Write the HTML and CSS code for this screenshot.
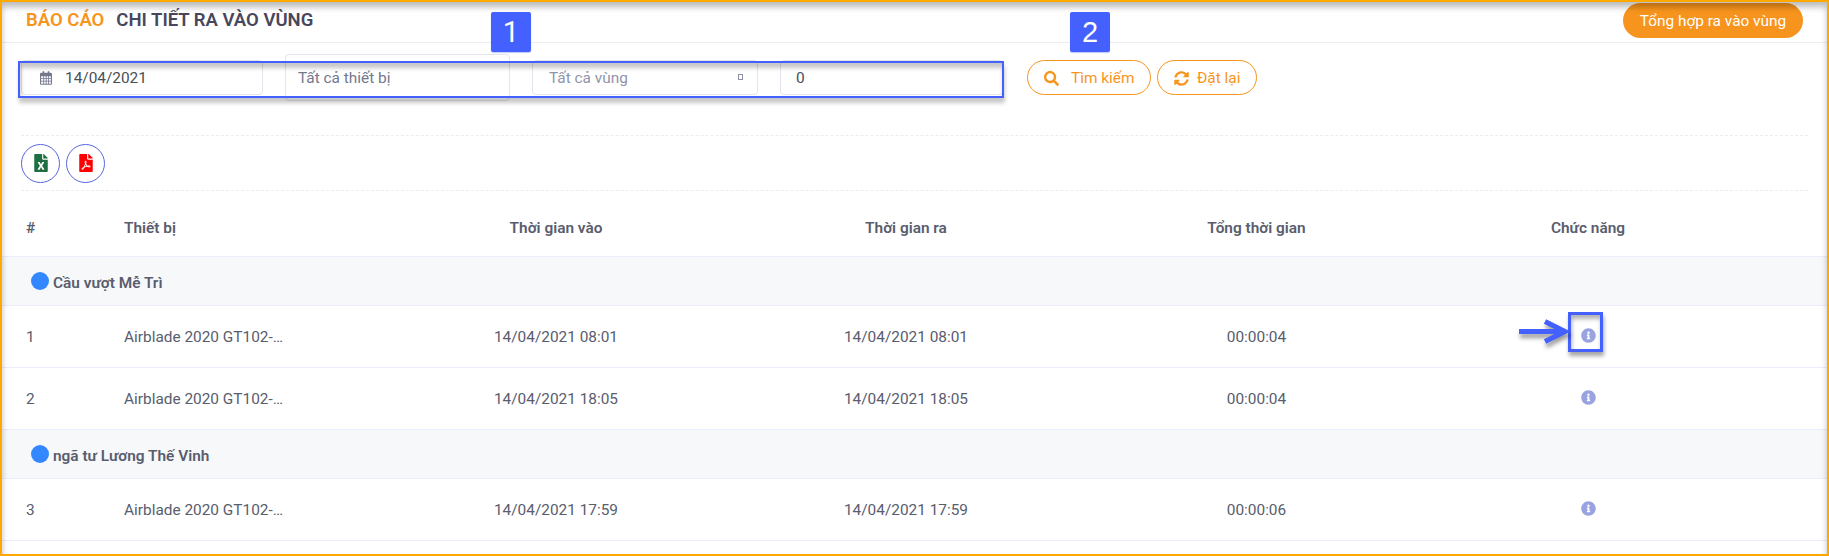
FILE: index.html
```html
<!DOCTYPE html>
<html lang="vi">
<head>
<meta charset="utf-8">
<title>Chi tiết ra vào vùng</title>
<link rel="stylesheet" href="styles.css">
</head>
<body>
<svg class="defs" aria-hidden="true">
  <symbol id="info" viewBox="0 0 512 512"><path fill="currentColor" d="M256 8C119 8 8 119 8 256s111 248 248 248 248-111 248-248S393 8 256 8zm0 110a42 42 0 1 1 0 84 42 42 0 0 1 0-84zm56 254c0 7-5 12-12 12h-88c-7 0-12-5-12-12v-24c0-7 5-12 12-12h12v-64h-12c-7 0-12-5-12-12v-24c0-7 5-12 12-12h64c7 0 12 5 12 12v100h12c7 0 12 5 12 12z"/></symbol>
</svg>
<div class="page">
  <header class="head">
    <h1 class="title"><span class="title-main">BÁO CÁO</span><span class="title-sub">CHI TIẾT RA VÀO VÙNG</span></h1>
    <a class="summary">Tổng hợp ra vào vùng</a>
  </header>
  <section class="filters">
    <div class="field date">
      <svg class="cal" viewBox="0 0 448 512"><path fill="currentColor" fill-rule="evenodd" d="M48 64h48V12q0-12 12-12h40q12 0 12 12v52h128V12q0-12 12-12h40q12 0 12 12v52h48q48 0 48 48v352q0 48-48 48H48q-48 0-48-48V112q0-48 48-48zM42 192v72h80v-72zm112 0v72h60v-72zm92 0v72h60v-72zm92 0v72h68v-72zM42 294v66h80v-66zm112 0v66h60v-66zm92 0v66h60v-66zm92 0v66h68v-66zM42 390v76h80v-76zm112 0v76h60v-76zm92 0v76h60v-76zm92 0v76h68v-76z"/></svg>
      <span>14/04/2021</span>
    </div>
    <div class="field device">Tất cả thiết bị</div>
    <div class="field zone"><span>Tất cả vùng</span><i class="caret"></i></div>
    <div class="field count">0</div>
    <div class="buttons">
      <a class="btn search"><svg class="ico" viewBox="0 0 512 512"><path fill="currentColor" d="M505 442.700L405.300 343c-4.500-4.500-10.600-7-17-7H372c27.600-35.300 44-79.700 44-128C416 93.100 322.900 0 208 0S0 93.100 0 208s93.100 208 208 208c48.300 0 92.700-16.400 128-44v16.300c0 6.400 2.500 12.500 7 17l99.700 99.700c9.400 9.400 24.600 9.400 33.900 0l28.300-28.300c9.400-9.400 9.400-24.600.1-34zM208 336c-70.700 0-128-57.200-128-128 0-70.700 57.200-128 128-128 70.700 0 128 57.200 128 128 0 70.700-57.200 128-128 128z"/></svg>Tìm kiếm</a>
      <a class="btn reset"><svg class="ico" viewBox="0 0 512 512"><path fill="currentColor" d="M370.720 133.280C339.458 104.008 298.888 87.962 255.848 88c-77.458.068-144.328 53.178-162.791 126.850-1.344 5.363-6.122 9.150-11.651 9.150H24.103c-7.498 0-13.194-6.807-11.807-14.176C33.933 94.924 134.813 8 256 8c66.448 0 126.791 26.136 171.315 68.685L463.030 40.970C478.149 25.851 504 36.559 504 57.941V192c0 13.255-10.745 24-24 24H345.941c-21.382 0-32.090-25.851-16.971-40.971l41.750-41.749zM32 296h134.059c21.382 0 32.090 25.851 16.971 40.971l-41.750 41.750c31.262 29.273 71.835 45.319 114.876 45.280 77.418-.070 144.315-53.144 162.787-126.849 1.344-5.363 6.122-9.150 11.651-9.150h57.304c7.498 0 13.194 6.807 11.807 14.176C478.067 417.076 377.187 504 256 504c-66.448 0-126.791-26.136-171.315-68.685L48.970 471.030C33.851 486.149 8 475.441 8 454.059V320c0-13.255 10.745-24 24-24z"/></svg>Đặt lại</a>
    </div>
  </section>
  <section class="exports">
    <a class="round excel"><svg viewBox="0 0 384 512"><path fill="currentColor" d="M224 136V0H24C10.700 0 0 10.700 0 24v464c0 13.300 10.700 24 24 24h336c13.300 0 24-10.700 24-24V160H248c-13.200 0-24-10.800-24-24zm60.100 106.500L224 336l60.100 93.500c5.100 8-.6 18.500-10.100 18.500h-34.900c-4.400 0-8.500-2.400-10.600-6.300C208.900 405.500 192 373 192 373c-6.400 14.800-10 20-36.600 68.800-2.100 3.900-6.100 6.300-10.500 6.300H110c-9.500 0-15.200-10.500-10.100-18.500l60.300-93.500-60.300-93.500c-5.200-8 .6-18.500 10.100-18.500h34.800c4.400 0 8.500 2.400 10.600 6.300 26.100 48.800 20 33.600 36.600 68.500 0 0 6.100-11.700 36.600-68.500 2.100-3.900 6.200-6.300 10.600-6.300H274c9.500-.1 15.200 10.400 10.100 18.400zM384 121.900v6.100H256V0h6.100c6.400 0 12.500 2.500 17 7l97.900 98c4.500 4.500 7 10.600 7 16.900z"/></svg></a>
    <a class="round pdf"><svg viewBox="0 0 384 512"><path fill="currentColor" d="M181.900 256.100c-5-16-4.900-46.900-2-46.900 8.400 0 7.600 36.900 2 46.900zm-1.700 47.200c-7.700 20.200-17.300 43.300-28.400 62.700 18.300-7 39-17.200 62.900-21.900-12.700-9.600-24.900-23.400-34.500-40.800zM86.100 428.100c0 .8 13.200-5.400 34.900-40.200-6.700 6.300-29.100 24.500-34.900 40.200zM248 160h136v328c0 13.300-10.700 24-24 24H24c-13.300 0-24-10.700-24-24V24C0 10.700 10.700 0 24 0h200v136c0 13.200 10.800 24 24 24zm-8 171.800c-20-12.200-33.300-29-42.700-53.800 4.500-18.500 11.600-46.600 6.200-64.200-4.700-29.400-42.400-26.500-47.800-6.800-5 18.300-.4 44.100 8.100 77-11.600 27.600-28.700 64.600-40.800 85.800-.1 0-.1.100-.2.100-27.100 13.900-73.600 44.500-54.500 68 5.600 6.900 16 10 21.500 10 17.900 0 35.700-18 61.100-61.800 25.800-8.500 54.100-19.100 79-23.200 21.700 11.800 47.100 19.500 64 19.500 29.200 0 31.200-32 19.700-43.400-13.900-13.600-54.300-9.700-73.600-7.200zM377 105L279 7c-4.500-4.500-10.600-7-17-7h-6v128h128v-6.100c0-6.300-2.500-12.400-7-16.900zm-74.100 255.300c4.100-2.700-2.500-11.900-42.800-9 37.100 15.800 42.800 9 42.800 9z"/></svg></a>
  </section>
  <section class="table">
    <div class="row thead"><span>#</span><span>Thiết bị</span><span class="c">Thời gian vào</span><span class="c">Thời gian ra</span><span class="c">Tổng thời gian</span><span class="c">Chức năng</span></div>
    <div class="group"><i class="dot"></i>Cầu vượt Mễ Trì</div>
    <div class="row"><span>1</span><span>Airblade 2020 GT102-…</span><span class="c">14/04/2021 08:01</span><span class="c">14/04/2021 08:01</span><span class="c">00:00:04</span><span class="c"><svg class="info"><use href="#info"/></svg></span></div>
    <div class="row"><span>2</span><span>Airblade 2020 GT102-…</span><span class="c">14/04/2021 18:05</span><span class="c">14/04/2021 18:05</span><span class="c">00:00:04</span><span class="c"><svg class="info"><use href="#info"/></svg></span></div>
    <div class="group"><i class="dot"></i>ngã tư Lương Thế Vinh</div>
    <div class="row"><span>3</span><span>Airblade 2020 GT102-…</span><span class="c">14/04/2021 17:59</span><span class="c">14/04/2021 17:59</span><span class="c">00:00:06</span><span class="c"><svg class="info"><use href="#info"/></svg></span></div>
  </section>
  <div class="frame"></div>
  <div class="mark mark-filters"></div>
  <div class="mark mark-info"></div>
  <svg class="arrow" viewBox="0 0 56 30"><path d="M1 15.500H46M27 5.500L47 15.500L27 25.500" fill="none" stroke="#4460ff" stroke-width="5"/><path d="M37 10L51 15.500L37 21z" fill="#4460ff"/></svg>
  <b class="step step-1">1</b>
  <b class="step step-2">2</b>
</div>
</body>
</html>
```
FILE: styles.css
```css
* { box-sizing: border-box; }
body {
  margin: 0;
  background: #fff;
  color: #595d6e;
  font: 400 15.4px/20px Roboto, sans-serif;
}
.defs { position: absolute; width: 0; height: 0; }
.page {
  position: relative;
  width: 1829px;
  height: 556px;
  overflow: hidden;
}

.head {
  display: flex;
  justify-content: space-between;
  align-items: flex-start;
  height: 43px;
  padding: 3px 26px 0 26px;
  border-bottom: 1px solid #ebedf0;
}
.title {
  display: flex;
  gap: 12px;
  margin: 6px 0 0;
  font-size: 18.5px;
  line-height: 22px;
  font-weight: 600;
  color: #48465b;
}
.title-main { color: #f7941d; }
.summary {
  width: 180px;
  height: 35px;
  border-radius: 18px;
  background: #f7941d;
  color: #fff;
  line-height: 36px;
  text-align: center;
}

.filters {
  display: flex;
  align-items: center;
  height: 92px;
  padding: 0 20px 23px 21px;
}
.field {
  display: flex;
  align-items: center;
  height: 35px;
  padding: 1px 15px 0;
  border: 1px solid #e2e5ec;
  border-radius: 4px;
  color: #495057;
}
.date { width: 242px; margin-right: 22px; padding-left: 18px; gap: 13px; }
.cal { width: 12px; height: 14px; color: #74788d; }
.device { width: 225px; height: 47px; margin-right: 22px; padding-left: 12px; color: #74788d; }
.zone { width: 226px; margin-right: 22px; justify-content: space-between; color: #9194a9; padding-left: 16px; padding-right: 14px; }
.caret { width: 5px; height: 6px; margin-top: -2px; border: 1px solid #8d90a5; }
.count { width: 224px; }
.buttons { display: flex; gap: 6px; margin-left: 23px; }
.btn {
  display: flex;
  align-items: center;
  height: 35px;
  padding-top: 1px;
  border: 1px solid #f7941d;
  border-radius: 18px;
  color: #f7941d;
}
.ico { width: 15px; height: 15px; }
.search { width: 124px; padding-left: 16px; gap: 12px; }
.reset { width: 100px; padding-left: 16px; gap: 8px; }

.exports {
  display: flex;
  align-items: center;
  gap: 6px;
  height: 56px;
  margin: 0 21px;
  border: dashed #ebedf2;
  border-width: 1px 0;
}
.round {
  display: flex;
  align-items: center;
  justify-content: center;
  width: 39px;
  height: 39px;
  border: 1px solid #5867dd;
  border-radius: 50%;
}
.round svg { width: 14px; height: 18px; }
.excel { color: #1d6f42; }
.pdf { color: #f00; }

.row {
  display: grid;
  grid-template-columns: 98px 257px 350px 350px 351px 312px;
  align-items: center;
  height: 62px;
  padding-left: 26px;
  border-bottom: 1px solid #ebedff;
}
.thead { height: 66px; font-weight: 600; padding-top: 9px; }
.c { text-align: center; }
.group {
  display: flex;
  align-items: center;
  gap: 4px;
  height: 49px;
  padding: 4px 0 0 31px;
  border-bottom: 1px solid #ebedff;
  background: #f7f8fa;
  font-weight: 600;
}
.dot { width: 18px; height: 18px; margin-top: -4px; border-radius: 50%; background: #3388ff; }
.info { display: inline-block; width: 15px; height: 15px; color: #99a3e0; vertical-align: middle; margin-top: -3px; }

.frame {
  position: absolute;
  inset: 0;
  border: 2px solid #ffa800;
  box-shadow: inset 0 5px 6px rgba(0, 0, 0, .27);
}
.mark { position: absolute; border: 2px solid #4460ff; }
.mark-filters {
  left: 18px;
  top: 61px;
  width: 986px;
  height: 37px;
  box-shadow: 1px 5px 4px rgba(0, 0, 0, .22), inset 1px 5px 4px rgba(0, 0, 0, .22);
}
.mark-info {
  left: 1568px;
  top: 312px;
  width: 35px;
  height: 40px;
  border-width: 3px;
  box-shadow: 1px 4px 4px rgba(0, 0, 0, .35), inset 1px 4px 4px rgba(0, 0, 0, .3);
}
.arrow {
  position: absolute;
  left: 1518px;
  top: 316px;
  width: 56px;
  height: 30px;
  overflow: visible;
  filter: drop-shadow(1px 4px 2px rgba(0, 0, 0, .4));
}
.step {
  position: absolute;
  top: 12px;
  width: 40px;
  height: 40px;
  border-radius: 2px;
  background: #4460ff;
  box-shadow: 0 1px 1px rgba(68, 96, 255, .35);
  color: #fff;
  font: 400 29px/41px "Liberation Sans", Arial, sans-serif;
  text-align: center;
}
.step-1 { left: 491px; font-family: Roboto, sans-serif; }
.step-2 { left: 1070px; }
```
